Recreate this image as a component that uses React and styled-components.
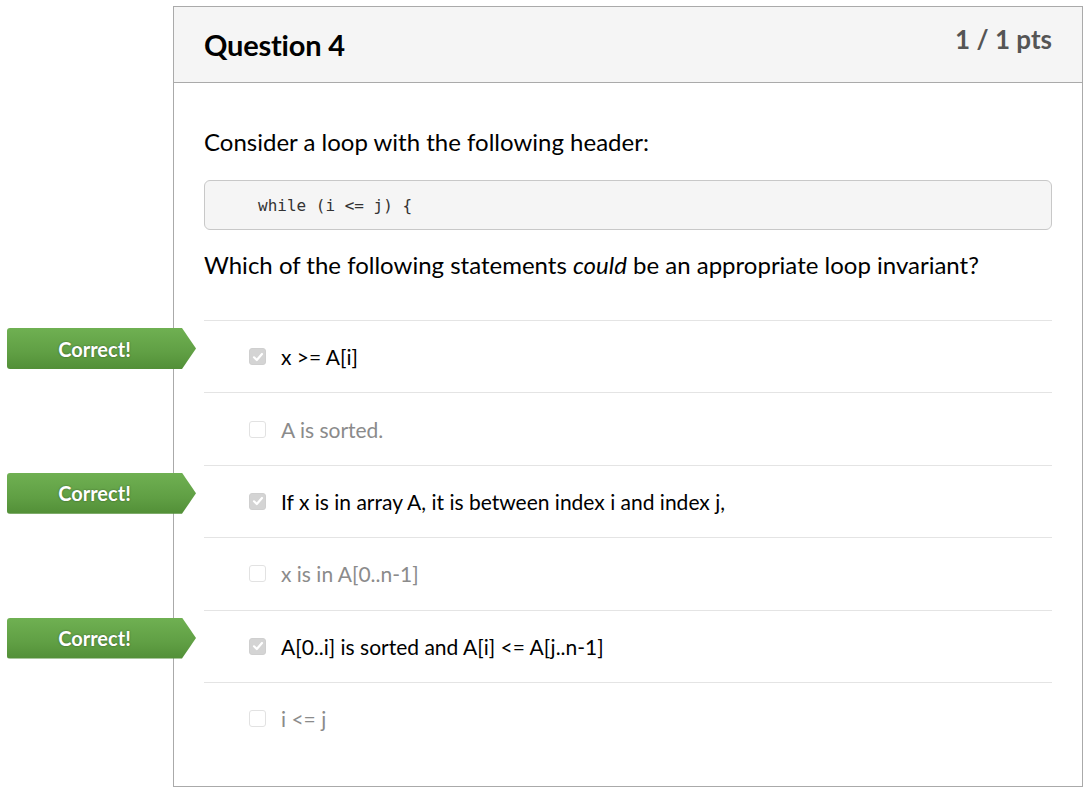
import React from 'react';
import styled, { createGlobalStyle } from 'styled-components';

const GlobalStyle = createGlobalStyle`
  body {
    margin: 0;
    background: #fff;
    font-family: Lato, "Open Sans", sans-serif;
    color: #2d3b45;
  }
`;

const Page = styled.div`
  padding: 6px 4px 8px 173px;
`;

const Card = styled.div`
  width: 910px;
  height: 781px;
  box-sizing: border-box;
  border: 1px solid #aaaaaa;
  background: #fff;
`;

const Header = styled.div`
  display: flex;
  justify-content: space-between;
  align-items: flex-start;
  height: 76px;
  box-sizing: border-box;
  padding: 0 30px;
  background: #f5f5f5;
  border-bottom: 1px solid #aaaaaa;
`;

const Title = styled.h2`
  margin: 0;
  padding-top: 20px;
  font-size: 29px;
  font-weight: 700;
  color: #000;
  letter-spacing: -0.2px;
`;

const Points = styled.div`
  padding-top: 16px;
  font-size: 26px;
  font-weight: 700;
  color: #555;
`;

const Body = styled.div`
  padding: 42px 30px 0 30px;
`;

const Text = styled.p`
  margin: 0;
  font-size: 24px;
  color: #000;
  line-height: 34px;

  em {
    font-style: italic;
  }
`;

const Code = styled.pre`
  margin: 21px 0 18px;
  height: 50px;
  box-sizing: border-box;
  padding: 0 0 0 53px;
  display: flex;
  align-items: center;
  background: #f5f5f5;
  border: 1px solid #c8c8c8;
  border-radius: 6px;
  font-family: "DejaVu Sans Mono", monospace;
  font-size: 16px;
  color: #333;
`;

const Answers = styled.div`
  margin-top: 38px;
`;

const Row = styled.div`
  position: relative;
  display: flex;
  align-items: center;
  height: 72.4px;
  box-sizing: border-box;
  padding-left: 45px;
  border-top: 1px solid #e4e4e4;
`;

const Box = styled.span`
  width: 17px;
  height: 17px;
  box-sizing: border-box;
  border-radius: 3px;
  border: 1px solid ${(p) => (p.checked ? '#cfcfcf' : '#e2e2e2')};
  background: ${(p) => (p.checked ? '#d4d4d4' : '#fff')};
  display: flex;
  align-items: center;
  justify-content: center;
  margin-right: 15px;
  flex-shrink: 0;
`;

const Label = styled.span`
  font-size: 21px;
  color: ${(p) => (p.selected ? '#000' : '#8b8b8b')};
`;

const Badge = styled.div`
  position: absolute;
  left: -197px;
  top: 7px;
  width: 189px;
  height: 41px;
  box-sizing: border-box;
  display: flex;
  align-items: center;
  justify-content: center;
  padding-right: 14px;
  background: linear-gradient(#6fb052, #609f44 60%, #528f37);
  border-radius: 3px 0 0 3px;
  clip-path: polygon(0 0, 175px 0, 100% 50%, 175px 100%, 0 100%);
  color: #fff;
  font-size: 20px;
  font-weight: 700;
  text-shadow: 0 0 2px rgba(0, 0, 0, 0.45);
`;

const answers = [
  { text: 'x >= A[i]', selected: true },
  { text: 'A is sorted.', selected: false },
  { text: 'If x is in array A, it is between index i and index j,', selected: true },
  { text: 'x is in A[0..n-1]', selected: false },
  { text: 'A[0..i] is sorted and A[i] <= A[j..n-1]', selected: true },
  { text: 'i <= j', selected: false },
];

function Check() {
  return (
    <svg width="12" height="12" viewBox="0 0 12 12">
      <path d="M2 6.3 L4.8 9 L10 3" fill="none" stroke="#fff" strokeWidth="2.2" strokeLinecap="round" strokeLinejoin="round" />
    </svg>
  );
}

export default function App() {
  return (
    <Page>
      <GlobalStyle />
      <Card>
        <Header>
          <Title>Question 4</Title>
          <Points>1 / 1 pts</Points>
        </Header>
        <Body>
          <Text>Consider a loop with the following header:</Text>
          <Code>while (i &lt;= j) {'{'}</Code>
          <Text>
            Which of the following statements <em>could</em> be an appropriate loop invariant?
          </Text>
          <Answers>
            {answers.map((a) => (
              <Row key={a.text}>
                {a.selected && <Badge>Correct!</Badge>}
                <Box checked={a.selected}>{a.selected && <Check />}</Box>
                <Label selected={a.selected}>{a.text}</Label>
              </Row>
            ))}
          </Answers>
        </Body>
      </Card>
    </Page>
  );
}
